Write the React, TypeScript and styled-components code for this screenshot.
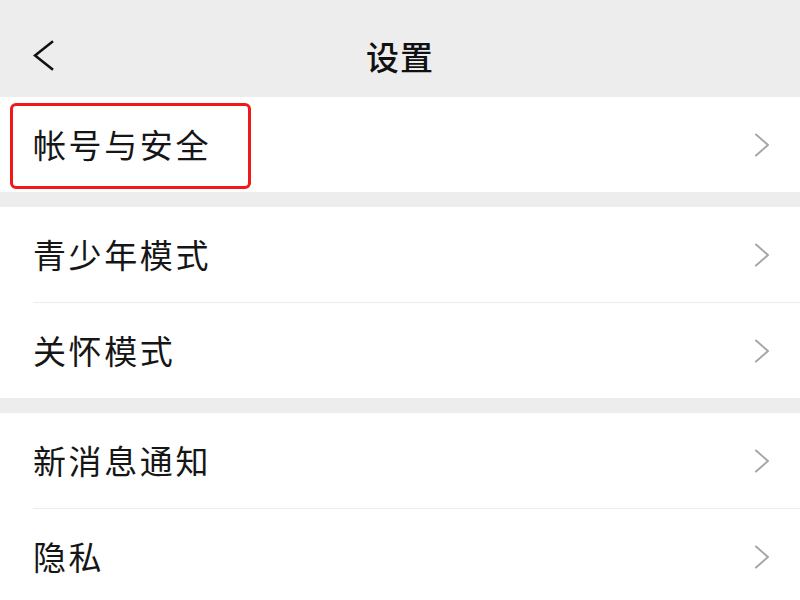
import React from "react";
import styled, { createGlobalStyle } from "styled-components";

const Global = createGlobalStyle`
  html, body { margin: 0; padding: 0; background: #ededed; }
  body { font-family: "Noto Sans CJK SC", "Noto Sans", sans-serif; }
`;

const Page = styled.div`
  width: 800px;
  height: 600px;
  overflow: hidden;
  background: #ededed;
  display: flex;
  flex-direction: column;
`;

const Header = styled.header`
  height: 97px;
  flex-shrink: 0;
  box-sizing: border-box;
  padding-top: 15px;
  display: grid;
  grid-template-columns: 80px 1fr 80px;
  align-items: center;
  background: #ededed;
`;

const BackButton = styled.div`
  display: flex;
  align-items: center;
  padding-left: 33px;
`;

const Title = styled.h1`
  margin: 0;
  text-align: center;
  font-size: 33px;
  font-weight: 500;
  color: #111;
  letter-spacing: 1px;
`;

const Section = styled.section<{ $gapTop?: boolean }>`
  background: #fff;
  margin-top: ${(p) => (p.$gapTop ? "15px" : "0")};
  display: flex;
  flex-direction: column;
  flex-shrink: 0;
`;

const Row = styled.div<{ $divider?: boolean }>`
  position: relative;
  height: 95px;
  display: flex;
  align-items: center;
  justify-content: space-between;
  padding: 0 30px 0 33px;
  box-sizing: border-box;
  &::after {
    content: "";
    display: ${(p) => (p.$divider ? "block" : "none")};
    position: absolute;
    left: 33px;
    right: 0;
    bottom: -1px;
    height: 1px;
    background: #ececec;
  }
  & + & {
    margin-top: 1px;
  }
`;

const Label = styled.span`
  font-size: 33px;
  color: #161616;
  letter-spacing: 2.6px;
  line-height: 1;
`;

const Highlight = styled.div`
  position: absolute;
  left: 10px;
  top: 6px;
  width: 241px;
  height: 86px;
  box-sizing: border-box;
  border: 3px solid #f01818;
  border-radius: 6px;
  pointer-events: none;
`;

const Chevron = () => (
  <svg width="16" height="24" viewBox="0 0 16 24" fill="none">
    <path d="M2 1.5 L14 12 L2 22.5" stroke="#a6a6a6" strokeWidth="2" strokeLinecap="round" strokeLinejoin="round" />
  </svg>
);

const Back = () => (
  <svg width="22" height="32" viewBox="0 0 22 32" fill="none">
    <path d="M19 2 L2 15.5 L19 29" stroke="#111" strokeWidth="2.6" strokeLinecap="square" strokeLinejoin="miter" />
  </svg>
);

type Item = { label: string; highlight?: boolean };

const groups: Item[][] = [
  [{ label: "帐号与安全", highlight: true }],
  [{ label: "青少年模式" }, { label: "关怀模式" }],
  [{ label: "新消息通知" }, { label: "隐私" }],
];

export default function App() {
  return (
    <Page>
      <Global />
      <Header>
        <BackButton>
          <Back />
        </BackButton>
        <Title>设置</Title>
        <div />
      </Header>
      {groups.map((g, gi) => (
        <Section key={gi} $gapTop={gi > 0}>
          {g.map((it, i) => (
            <Row key={it.label} $divider={i < g.length - 1}>
              {it.highlight && <Highlight />}
              <Label>{it.label}</Label>
              <Chevron />
            </Row>
          ))}
        </Section>
      ))}
    </Page>
  );
}
